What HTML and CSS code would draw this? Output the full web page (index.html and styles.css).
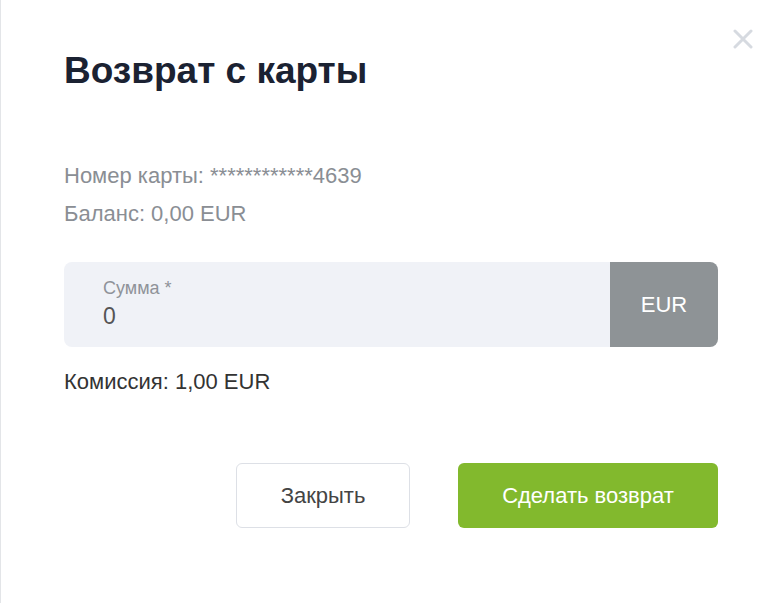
FILE: index.html
```html
<!DOCTYPE html>
<html lang="ru">
<head>
<meta charset="utf-8">
<title>Возврат с карты</title>
<link rel="stylesheet" href="styles.css">
</head>
<body>
<div class="modal">
  <button class="close" aria-label="Закрыть">
    <svg width="20" height="20" viewBox="0 0 20 20"><path d="M2 2 L18 18 M18 2 L2 18" stroke="#d6dae0" stroke-width="3" stroke-linecap="round"/></svg>
  </button>
  <h1 class="title">Возврат с карты</h1>
  <div class="info">
    <p class="info-line">Номер карты: ************4639</p>
    <p class="info-line">Баланс: 0,00 EUR</p>
  </div>
  <div class="amount">
    <div class="amount-field">
      <span class="amount-label">Сумма *</span>
      <span class="amount-value">0</span>
    </div>
    <div class="amount-currency">EUR</div>
  </div>
  <p class="fee">Комиссия: 1,00 EUR</p>
  <div class="actions">
    <button class="btn btn-secondary">Закрыть</button>
    <button class="btn btn-primary">Сделать возврат</button>
  </div>
</div>
</body>
</html>
```
FILE: styles.css
```css
html, body {
  margin: 0;
  padding: 0;
  background: #ffffff;
}
body {
  font-family: Arial, "Liberation Sans", sans-serif;
  width: 779px;
  height: 603px;
  overflow: hidden;
}
.modal {
  position: relative;
  box-sizing: border-box;
  height: 603px;
  padding: 49px 61px 0 63px;
  border-left: 1px solid #e3e5e8;
}
.close {
  position: absolute;
  top: 28px;
  left: 731px;
  width: 22px;
  height: 22px;
  padding: 0;
  border: 0;
  background: none;
  display: flex;
  align-items: center;
  justify-content: center;
}
.title {
  margin: 0;
  font-size: 37px;
  line-height: 44px;
  font-weight: 700;
  color: #1b2232;
}
.info {
  margin-top: 64px;
}
.info-line {
  margin: 0;
  font-size: 22px;
  line-height: 38px;
  color: #8a8e94;
}
.amount {
  margin-top: 29px;
  display: flex;
  height: 85px;
  border-radius: 8px;
  overflow: hidden;
}
.amount-field {
  flex: 1;
  background: #f0f2f7;
  display: flex;
  flex-direction: column;
  padding: 15px 0 0 39px;
}
.amount-label {
  font-size: 18px;
  line-height: 22px;
  color: #8f9399;
}
.amount-value {
  margin-top: 2px;
  font-size: 23px;
  line-height: 30px;
  color: #555555;
}
.amount-currency {
  width: 108px;
  background: #8e9396;
  color: #ffffff;
  font-size: 22px;
  display: flex;
  align-items: center;
  justify-content: center;
}
.fee {
  margin: 23px 0 0;
  font-size: 22px;
  line-height: 24px;
  color: #333333;
}
.actions {
  margin-top: 69px;
  display: flex;
  justify-content: flex-end;
  gap: 48px;
}
.btn {
  height: 65px;
  border-radius: 6px;
  font-family: Arial, "Liberation Sans", sans-serif;
  font-size: 22px;
  cursor: pointer;
}
.btn-secondary {
  width: 174px;
  background: #ffffff;
  border: 1px solid #dde0e6;
  color: #444444;
}
.btn-primary {
  width: 260px;
  background: #82b92d;
  border: 0;
  color: #ffffff;
}
```
